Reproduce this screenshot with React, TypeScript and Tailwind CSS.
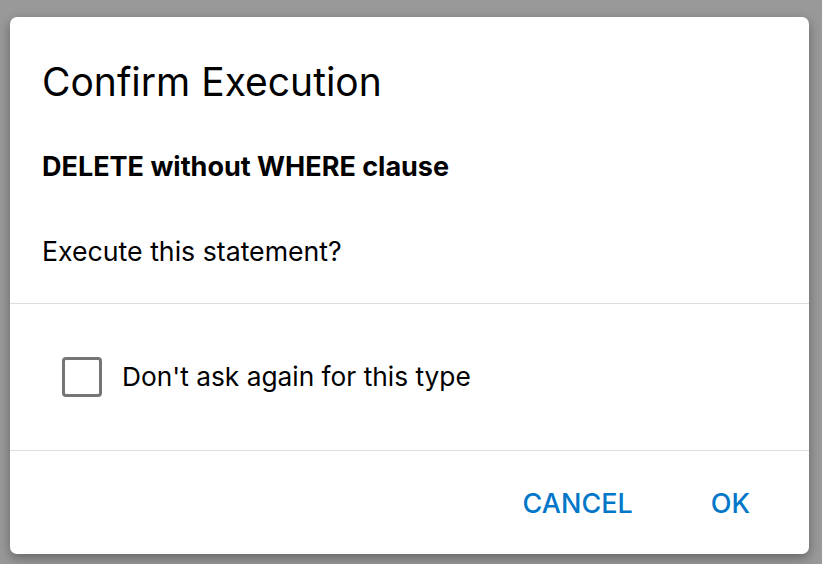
export default function App() {
  return (
    <div className="w-[822px] h-[564px] bg-[#999999] pt-[17px] pl-[10px] font-['Inter',sans-serif]">
      <div className="w-[799px] h-[537px] bg-white rounded-[7px] shadow-[0_4px_12px_rgba(0,0,0,0.35)] flex flex-col">
        <div className="px-[32px] pt-[23px] pb-[34px]">
          <h1 className="text-[39px] leading-[84px] text-black">Confirm Execution</h1>
          <p className="mt-[25px] text-[27px] font-bold leading-[36px] text-black">DELETE without WHERE clause</p>
          <p className="mt-[48px] text-[26.7px] leading-[36px] text-black">Execute this statement?</p>
        </div>
        <div className="border-t border-[#dddddd]" />
        <label className="flex items-center gap-[20px] pl-[52px] h-[146px]">
          <span className="w-[40px] h-[40px] border-[3px] border-[#757575] rounded-[4px]" />
          <span className="text-[26.3px] text-black">Don't ask again for this type</span>
        </label>
        <div className="border-t border-[#dddddd]" />
        <div className="flex-1 flex items-center justify-end pt-[4px] pr-[59px] gap-[78px]">
          <button className="text-[27px] font-medium text-[#0277c9]">CANCEL</button>
          <button className="text-[27px] font-medium text-[#0277c9]">OK</button>
        </div>
      </div>
    </div>
  );
}
